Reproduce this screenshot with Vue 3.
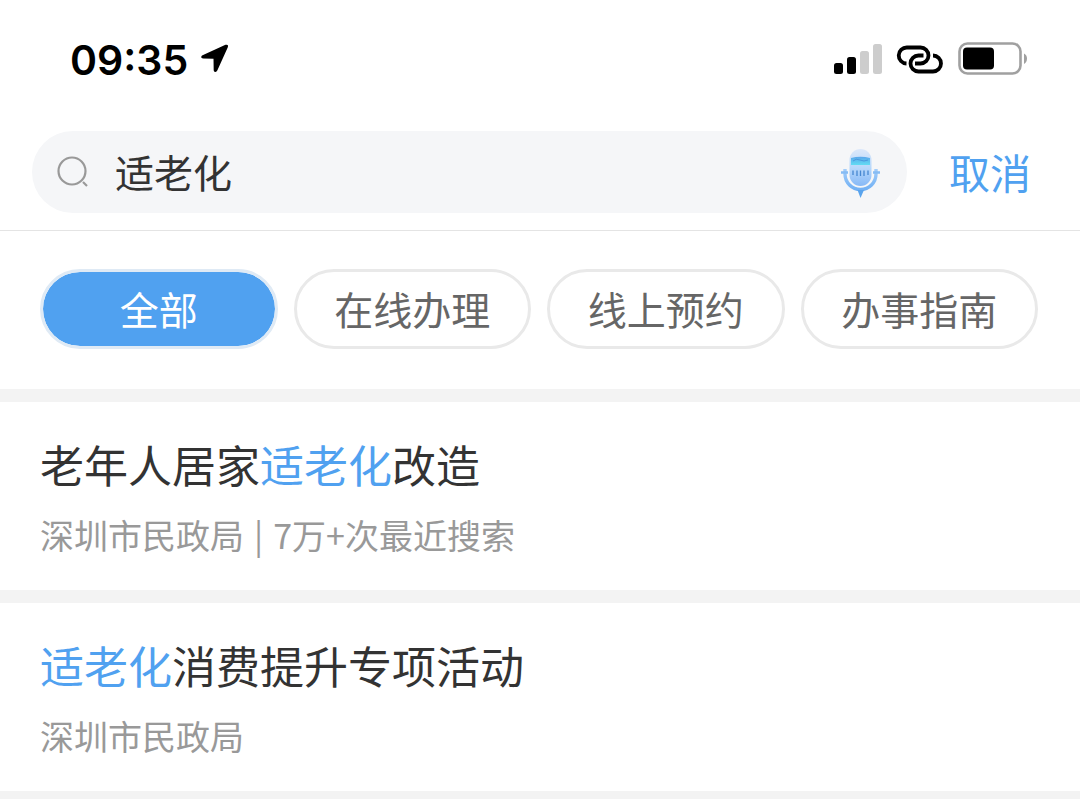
<script setup>
import { ref, computed } from 'vue'

const query = ref('适老化')
const tabs = ['全部', '在线办理', '线上预约', '办事指南']
const active = ref('全部')
const keyword = '适老化'

const items = [
  { title: '老年人居家适老化改造', source: '深圳市民政局', heat: '7万+次最近搜索' },
  { title: '适老化消费提升专项活动', source: '深圳市民政局' },
]

const results = computed(() =>
  items.map((item) => ({
    ...item,
    parts: item.title.split(new RegExp(`(${keyword})`)).filter(Boolean),
  }))
)
</script>

<template>
  <div class="page">
    <header class="top">
      <div class="status">
        <div class="clock">
          <span>09:35</span>
          <svg class="arrow" width="30" height="32" viewBox="0 0 30 32" aria-hidden="true">
            <path d="M2 11.500 L25.500 0.800 Q29 0 27.700 3.500 L17.300 26.500 Q15 29.500 13.700 26.500 L13.500 14.800 L3 14.600 Q0 13.800 2 11.500Z" />
          </svg>
        </div>
        <div class="signals">
          <svg width="48" height="32" viewBox="0 0 48 32" aria-hidden="true">
            <rect x="0" y="20" width="9" height="11" rx="2.500" />
            <rect x="13" y="14" width="9" height="17" rx="2.500" />
            <rect x="26" y="8" width="9" height="23" rx="2.500" fill="#cdcdcd" />
            <rect x="39" y="1" width="9" height="30" rx="2.500" fill="#cdcdcd" />
          </svg>
          <svg width="48" height="30" viewBox="0 0 48 30" fill="none" stroke="#000" stroke-width="3.800" aria-hidden="true">
            <path d="M10.500 19.500 A8 8 0 0 1 11 3.500 H24.500 A8 8 0 0 1 24.500 19.500 H19" />
            <path d="M27.500 11.500 H22.500 A8 8 0 0 0 22.500 27.500 H37 A8 8 0 0 0 37 11.500" />
          </svg>
          <svg width="70" height="34" viewBox="0 0 70 34" aria-hidden="true">
            <rect x="1.500" y="1.500" width="61" height="30" rx="8" fill="none" stroke="#a0a0a0" stroke-width="2.600" />
            <rect x="5" y="5.500" width="31" height="22" rx="4" />
            <path d="M66 11.500 Q69 13 69 16.500 T66 22Z" fill="#a0a0a0" />
          </svg>
        </div>
      </div>
      <form class="search" role="search" @submit.prevent>
        <div class="field">
          <svg class="lens" width="34" height="34" viewBox="0 0 34 34" fill="none" stroke="#999" stroke-width="2.200" aria-hidden="true">
            <circle cx="16" cy="16" r="13.500" />
            <path d="M27 27 L31 31" />
          </svg>
          <input v-model="query" type="text" aria-label="搜索" />
          <button class="mic" type="button" aria-label="语音搜索">
            <svg width="40" height="52" viewBox="0 0 40 52" aria-hidden="true">
              <defs>
                <linearGradient id="mic-body" x1="0" y1="0" x2="0" y2="1">
                  <stop offset="0" stop-color="#dce8fa" />
                  <stop offset="0.500" stop-color="#b8d8fb" />
                  <stop offset="1" stop-color="#86b9f7" />
                </linearGradient>
                <linearGradient id="mic-screen" x1="0" y1="0" x2="0" y2="1">
                  <stop offset="0" stop-color="#5aa6ec" />
                  <stop offset="1" stop-color="#62dcf3" />
                </linearGradient>
                <linearGradient id="mic-stand" x1="0" y1="0" x2="0" y2="1">
                  <stop offset="0" stop-color="#a3cdfa" />
                  <stop offset="1" stop-color="#72b1f4" />
                </linearGradient>
              </defs>
              <rect x="9.500" y="3" width="22" height="37" rx="11" fill="url(#mic-body)" />
              <path d="M11 12 Q20.500 9.500 30 12 V19 H11Z" fill="url(#mic-screen)" />
              <path d="M13 15 Q16 12 20 14 T28 14" fill="none" stroke="#4a98dd" stroke-width="1" />
              <path d="M13 24.500 V29 M17 24.500 V30 M20.500 24.500 V30 M24 24.500 V30 M28 24.500 V29" stroke="#4687d1" stroke-width="1.300" />
              <path d="M5 23 V28 A15.500 15.500 0 0 0 36 28 V23" fill="none" stroke="url(#mic-stand)" stroke-width="3.400" />
              <path d="M1 26.500 H8 M33 26.500 H40" stroke="#86bcf4" stroke-width="2.400" />
              <path d="M17.500 44 H24 L20.500 52Z" fill="#5aa4ed" />
            </svg>
          </button>
        </div>
        <button class="cancel" type="button">取消</button>
      </form>
    </header>

    <nav class="tabs" aria-label="分类">
      <button
        v-for="tab in tabs"
        :key="tab"
        type="button"
        class="tab"
        :class="{ active: tab === active }"
        :aria-pressed="tab === active"
        @click="active = tab"
      >{{ tab }}</button>
    </nav>

    <main class="results">
      <article v-for="item in results" :key="item.title" class="item">
        <h2 class="title"><span
          v-for="(part, i) in item.parts"
          :key="i"
          :class="{ hit: part === keyword }"
        >{{ part }}</span></h2>
        <p class="meta">
          <span>{{ item.source }}</span>
          <template v-if="item.heat"><span>|</span><span>{{ item.heat }}</span></template>
        </p>
      </article>
    </main>
  </div>
</template>

<style>
body {
  margin: 0;
}
</style>

<style scoped>
.page {
  display: flex;
  flex-direction: column;
  gap: 13px;
  min-height: 100vh;
  background: #f3f3f3;
  color: #333;
  font-family: "Noto Sans CJK SC", sans-serif;
}
svg {
  display: block;
  flex: none;
}
button,
input {
  margin: 0;
  padding: 0;
  border: 0;
  background: none;
  color: inherit;
  font: inherit;
}
button {
  cursor: pointer;
}
.top {
  background: #fff;
  border-bottom: 1px solid #e4e4e4;
  margin-bottom: -13px;
}
.status {
  display: flex;
  justify-content: space-between;
  align-items: center;
  height: 118px;
  padding: 0 52px 0 70px;
}
.clock {
  display: flex;
  align-items: center;
  gap: 12px;
  padding-top: 2px;
  color: #000;
  font: 600 41px/48px Inter, sans-serif;
}
.signals {
  display: flex;
  align-items: center;
  gap: 14px;
}
.search {
  display: flex;
  align-items: center;
  padding: 13px 49px 17px 32px;
}
.field {
  display: flex;
  flex: 1;
  align-items: center;
  min-width: 0;
  height: 82px;
  padding: 0 27px 0 24px;
  border-radius: 41px;
  background: #f5f6f8;
}
.field input {
  flex: 1;
  min-width: 0;
  height: 58px;
  padding: 0 25px 2px;
  outline: none;
  font-size: 39px;
}
.cancel {
  margin-left: 42px;
  padding-bottom: 2px;
  color: #50a1f0;
  font-size: 41px;
  line-height: 60px;
}
.tabs {
  display: grid;
  grid-template-columns: repeat(4, 1fr);
  gap: 16px;
  padding: 38px 42px 40px 40px;
  background: #fff;
}
.tab {
  height: 80px;
  padding-bottom: 2px;
  border: 3px solid #e9e9e9;
  border-radius: 40px;
  color: #666;
  font-size: 39px;
  line-height: 72px;
}
.tab.active {
  border-color: #dfeaf5;
  background: #50a1f0;
  background-clip: padding-box;
  color: #fff;
}
.results {
  display: flex;
  flex-direction: column;
  gap: 13px;
}
.item {
  padding: 31px 40px 31px;
  background: #fff;
}
.title {
  margin: 0 0 16px;
  font-size: 44px;
  font-weight: 400;
  line-height: 62px;
}
.hit {
  color: #50a1f0;
}
.meta {
  display: flex;
  gap: 10px;
  margin: 0;
  color: #999;
  font-size: 34px;
  line-height: 48px;
}
</style>
